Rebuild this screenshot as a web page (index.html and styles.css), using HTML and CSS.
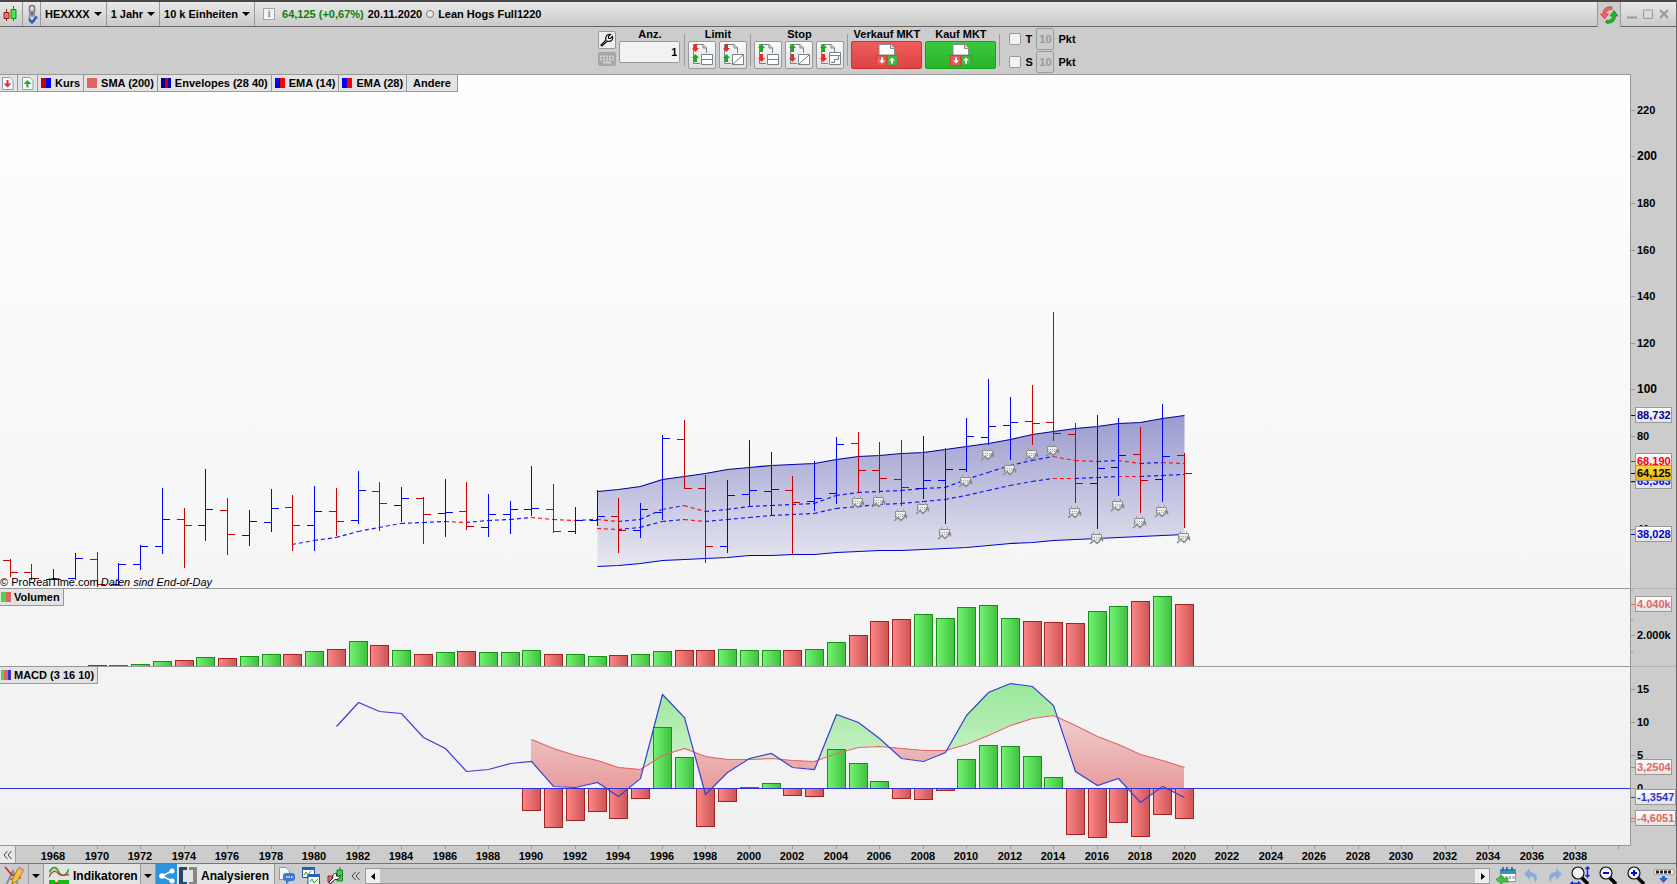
FILE: index.html
```html
<!DOCTYPE html>
<html lang="de">
<head>
  <title>HEXXXX - Lean Hogs Full1220</title>
  <meta charset="utf-8">
  <meta name="viewport" content="width=device-width, initial-scale=1">
  <link rel="stylesheet" href="styles.css">
</head>

<body>
  <svg class="defs" width="0" height="0" aria-hidden="true">
    <defs>
      <linearGradient id="up"><stop offset="0" stop-color="#72f472"/><stop offset="1" stop-color="#40c040"/></linearGradient>
      <linearGradient id="down"><stop offset="0" stop-color="#ff8686"/><stop offset="1" stop-color="#cc5555"/></linearGradient>
      <linearGradient id="band" gradientUnits="userSpaceOnUse" x1="0" y1="415" x2="0" y2="567"><stop offset="0" stop-color="#9b9bce"/><stop offset="1" stop-color="#e8e8f1"/></linearGradient>
      <linearGradient id="fill-up" gradientUnits="userSpaceOnUse" x1="0" y1="683" x2="0" y2="770"><stop offset="0" stop-color="#98e898"/><stop offset="1" stop-color="#cdf1cd"/></linearGradient>
      <linearGradient id="fill-down" gradientUnits="userSpaceOnUse" x1="0" y1="715" x2="0" y2="788"><stop offset="0" stop-color="#efd0d0"/><stop offset="1" stop-color="#e89c9c"/></linearGradient>
      <linearGradient id="tag" x2="0" y2="1"><stop offset="0" stop-color="#fff"/><stop offset="1" stop-color="#e4e4e4"/></linearGradient>
      <linearGradient id="tag-last" x2="0" y2="1"><stop offset="0" stop-color="#ffd83c"/><stop offset="1" stop-color="#f0b400"/></linearGradient>
      <symbol id="page" viewBox="0 0 24 24">
        <path d="M3.500 20.500V1.500H13L16.500 5V10M13 1.500V5H16.500M3.500 20.500H10" fill="none" stroke="#75838c"/>
      </symbol>
      <symbol id="arrow-down" viewBox="0 0 7 8"><path d="M2 0H5V4H7L3.500 8L0 4H2Z"/></symbol>
      <symbol id="arrow-up" viewBox="0 0 7 8"><path d="M2 8H5V4H7L3.500 0L0 4H2Z"/></symbol>
      <symbol id="market" viewBox="0 0 22 22">
        <path d="M3 0.500H15L18.500 4V11H3Z" fill="#fff" stroke="#8b8b8b"/>
        <path d="M14.500 0.500V4.500H18.500" fill="#ddd" stroke="#8b8b8b"/>
        <path d="M0 11H11V22H0Z" fill="#e03c3c"/><path d="M11 11H22V22H11Z" fill="#1cae1c"/>
        <path d="M1 12H10V21H1ZM12 12H21V21H12Z" fill="#fff" opacity=".15"/>
        <path d="M5 13.500H7V16.500H9L6 19.500L3 16.500H5ZM15 19.500H17V16.500H19L16 13.500L13 16.500H15Z" fill="#fff"/>
      </symbol>
      <symbol id="lens" viewBox="0 0 20 20">
        <path d="M12 12L18 18" stroke="#000" stroke-width="3.500"/>
        <circle cx="8" cy="7" r="6" fill="#eef3f8" stroke="#111" stroke-width="1.200"/>
      </symbol>
    </defs>
  </svg>

  <header class="titlebar">
    <button class="cell cell_icon" aria-label="Chartstil">
      <svg width="16" height="18" viewBox="0 0 16 18">
        <path d="M4.500 4V16" stroke="#a01c1c"/><path d="M2 7.500H7V13.500H2Z" fill="#e87474" stroke="#a01c1c"/>
        <path d="M11.500 1V16" stroke="#169016"/><path d="M9 4.500H14V13.500H9Z" fill="#4ce44c" stroke="#169016"/>
      </svg>
    </button>
    <button class="cell cell_link" aria-label="Verknüpfen">
      <svg width="12" height="21" viewBox="0 0 12 21" fill="none">
        <rect x="3.500" y="1.500" width="5" height="8" rx="2.500" stroke="#777" stroke-width="1.500"/>
        <rect x="3.500" y="10" width="5" height="8" rx="2.500" stroke="#888" stroke-width="1.500"/>
        <path d="M6 6V13" stroke="#555"/>
        <path d="M3 15L6 18.500L11 12.500" stroke="#1e5ed0" stroke-width="2.200"/>
      </svg>
    </button>
    <button class="cell cell_menu">HEXXXX <i class="caret"></i></button>
    <button class="cell cell_menu">1 Jahr <i class="caret"></i></button>
    <button class="cell cell_menu">10 k Einheiten <i class="caret"></i></button>
    <div class="quote">
      <span class="quote__info">i</span>
      <span class="quote__price">64,125 (+0,67%)</span>
      <span>20.11.2020</span>
      <span class="quote__dot"></span>
      <span>Lean Hogs Full1220</span>
    </div>
    <button class="refresh" aria-label="Aktualisieren">
      <svg width="18" height="18" viewBox="0 0 18 18">
        <path d="M12 1C6 0 3 3 3 8H0.500L4.500 13L8.500 8H6C6 5 8 3.500 12 3.500Z" fill="#f06060" stroke="#b83030" stroke-width=".6"/>
        <path d="M6 17C12 18 15.500 15 15.500 10H18L14 4.500L10 10H12.500C12.500 13 10 14.500 6 14.500Z" fill="#20b820" stroke="#107010" stroke-width=".6"/>
      </svg>
    </button>
    <div class="window-buttons">
      <button aria-label="Minimieren"><svg width="10" height="10"><path d="M0 8.500H10" stroke="#999" stroke-width="2"/></svg></button>
      <button aria-label="Maximieren"><svg width="10" height="10"><path d="M.5 1H9.500V9.500H.5Z" fill="none" stroke="#999"/></svg></button>
      <button aria-label="Schließen"><svg width="10" height="10"><path d="M1 1L9 9M9 1L1 9" stroke="#999" stroke-width="2"/></svg></button>
    </div>
  </header>

  <div class="trading">
    <div class="trading__tools">
      <button class="tool" aria-label="Einstellungen">
        <svg width="14" height="14" viewBox="0 0 14 14"><path d="M2 13L1 12L6 7C5 4 7 1 10.500 1.500L8.500 3.500V5.500H10.500L12.500 3.500C13.500 7 10.500 9 7.500 8Z" fill="#fff" stroke="#111" stroke-width="1.200"/></svg>
      </button>
      <button class="tool tool_keyboard" aria-label="Tastatur">
        <svg width="14" height="9"><path d="M0 1.500H14M0 4.500H14" stroke="#d4d4d4" stroke-width="2" stroke-dasharray="2 1"/><path d="M3 7.500H11" stroke="#d4d4d4" stroke-width="2"/></svg>
      </button>
    </div>
    <label class="group group_qty">Anz.<input class="qty" type="text" value="1"></label>
    <div class="group">Limit
      <div class="group__buttons">
        <button class="order" aria-label="Limit Order"><svg width="24" height="24"><use href="#page"/><g fill="#e02c2c"><use href="#arrow-down" x="2" y="1" width="7" height="8"/></g><g fill="#10b010"><use href="#arrow-up" x="2" y="11" width="7" height="8"/></g><path d="M11.500 11.500H22.500V21.500H11.500ZM11 16.500H23" fill="#fff" stroke="#75838c"/></svg></button>
        <button class="order" aria-label="Limit Linie"><svg width="24" height="24"><use href="#page"/><g fill="#e02c2c"><use href="#arrow-down" x="2" y="1" width="7" height="8"/></g><g fill="#10b010"><use href="#arrow-up" x="2" y="11" width="7" height="8"/></g><path d="M11.500 11.500H22.500V21.500H11.500ZM12 21L22 12" fill="#fff" stroke="#75838c"/></svg></button>
      </div>
    </div>
    <div class="group">Stop
      <div class="group__buttons">
        <button class="order" aria-label="Stop Order"><svg width="24" height="24"><use href="#page"/><g fill="#10b010"><use href="#arrow-up" x="2" y="1" width="7" height="8"/></g><g fill="#e02c2c"><use href="#arrow-down" x="2" y="11" width="7" height="8"/></g><path d="M11.500 11.500H22.500V21.500H11.500ZM11 16.500H23" fill="#fff" stroke="#75838c"/></svg></button>
        <button class="order" aria-label="Stop Linie"><svg width="24" height="24"><use href="#page"/><g fill="#10b010"><use href="#arrow-up" x="2" y="1" width="7" height="8"/></g><g fill="#e02c2c"><use href="#arrow-down" x="2" y="11" width="7" height="8"/></g><path d="M11.500 11.500H22.500V21.500H11.500ZM12 21L22 12" fill="#fff" stroke="#75838c"/></svg></button>
        <button class="order" aria-label="Trailing Stop"><svg width="24" height="24"><use href="#page"/><g fill="#10b010"><use href="#arrow-up" x="2" y="1" width="7" height="8"/></g><g fill="#e02c2c"><use href="#arrow-down" x="2" y="11" width="7" height="8"/></g><path d="M11.500 9.500H22.500V21.500H11.500ZM11 12.500H23M13 19.500H16.500V16.500H20.500V13" fill="#fff" stroke="#75838c"/></svg></button>
      </div>
    </div>
    <div class="group group_market">Verkauf MKT
      <button class="market market_sell" aria-label="Verkauf MKT"><svg width="22" height="22"><use href="#market"/></svg></button>
    </div>
    <div class="group">Kauf MKT
      <button class="market market_buy" aria-label="Kauf MKT"><svg width="22" height="22"><use href="#market"/></svg></button>
    </div>
    <div class="limits">
      <div class="limits__row"><input id="target" type="checkbox"><label for="target">T</label><input class="points" type="text" value="10" aria-label="T Punkte" disabled>Pkt</div>
      <div class="limits__row"><input id="stop" type="checkbox"><label for="stop">S</label><input class="points" type="text" value="10" aria-label="S Punkte" disabled>Pkt</div>
    </div>
  </div>

  <main class="workspace">
    <div class="panels">
      <section class="panel panel_price">
        <div class="tabs">
          <button class="tab tab_icon" aria-label="Nach unten"><svg width="13" height="13"><path d="M1.500 .5H9L12 3.500V12.500H1.500Z" fill="#f8fbff" stroke="#8aa0b4"/><path d="M5.500 3H7.500V6.500H10.500L6.500 10.500L2.500 6.500H5.500Z" fill="#e03030"/></svg></button>
          <button class="tab tab_icon tab_up" aria-label="Nach oben"><svg width="13" height="13"><path d="M1.500 .5H9L12 3.500V12.500H1.500Z" fill="#f8fbff" stroke="#8aa0b4"/><path d="M5.500 10.500H7.500V7H10.500L6.500 3L2.500 7H5.500Z" fill="#18b018"/></svg></button>
          <button class="tab"><i class="swatch swatch_kurs"></i>Kurs</button>
          <button class="tab"><i class="swatch swatch_sma"></i>SMA (200)</button>
          <button class="tab"><i class="swatch swatch_env"></i>Envelopes (28 40)</button>
          <button class="tab"><i class="swatch swatch_ema"></i>EMA (14)</button>
          <button class="tab"><i class="swatch swatch_ema"></i>EMA (28)</button>
          <button class="tab tab_more">Andere</button>
        </div>
        <svg class="plot" id="price" data-top="75" height="513"></svg>
      </section>
      <section class="panel">
        <div class="tabs"><button class="tab"><i class="swatch swatch_vol"></i>Volumen</button></div>
        <svg class="plot" id="volume" data-top="589" height="77"></svg>
      </section>
      <section class="panel">
        <div class="tabs"><button class="tab"><i class="swatch swatch_macd"></i>MACD (3 16 10)</button></div>
        <svg class="plot" id="macd" data-top="667" height="178"></svg>
      </section>
    </div>
    <svg class="axis" id="axis" width="45" height="772"></svg>
  </main>

  <div class="timeline">
    <button class="timeline__back" aria-label="Zurück"><svg width="10" height="10"><path d="M4.500 1L1 5L4.500 9M8.500 1L5 5L8.500 9" fill="none" stroke="#444"/></svg></button>
    <svg class="timeline__years" id="years" height="18"></svg>
  </div>

  <footer class="statusbar">
    <button class="status status_draw" aria-label="Zeichnen">
      <svg width="21" height="20" viewBox="0 0 21 20"><path d="M2 19L9 5L14 19M5 13H12" fill="none" stroke="#8a9298" stroke-width="2"/><path d="M1 1L8 9L17 12" fill="none" stroke="#e01818" stroke-width="1.500"/><path d="M8 18L9 12L15 1L20 4L13 15Z" fill="#f4c440" stroke="#b07c10"/><path d="M15 1L20 4L19 6L14 3Z" fill="#f09090"/></svg>
    </button>
    <button class="status status_caret" aria-label="Zeichenmenü"><i class="caret"></i></button>
    <button class="status status_main">
      <svg width="20" height="20" viewBox="0 0 20 20"><path d="M0 6C5-2 8 2 10 6S16 12 20 3V9C16 10 13 9 10 6C7 3 4 3 0 9Z" fill="#a8dca8"/><path d="M0 6C5-2 8 2 10 6S16 12 20 3" fill="none" stroke="#28a028" stroke-width="1.500"/><path d="M0 11C4 3 7 5 10 8S16 8 20 9" fill="none" stroke="#b84848" stroke-width="1.500"/><path d="M0 14H6V20H0ZM13 14H20V20H13Z" fill="#1cb81c"/><path d="M6 16H9V20H6Z" fill="#e02c2c"/><path d="M9 14H13V20H9Z" fill="#1cb81c"/></svg>
      Indikatoren
    </button>
    <button class="status status_caret" aria-label="Indikatormenü"><i class="caret"></i></button>
    <button class="status status_share" aria-label="Teilen">
      <svg width="16" height="16" viewBox="0 0 16 16"><path d="M13 3L3 8L13 13" fill="none" stroke="#fff" stroke-width="1.500"/><g fill="#fff"><circle cx="13" cy="3" r="2.500"/><circle cx="3" cy="8" r="2.800"/><circle cx="13" cy="13" r="2.500"/></g></svg>
    </button>
    <button class="status status_analyse">
      <svg width="18" height="18" viewBox="0 0 18 18"><path d="M0 0H8V3H4V15H8V18H0Z" fill="#24486c"/><path d="M18 0H10V3H14V15H10V18H18Z" fill="#888"/></svg>
      Analysieren
    </button>
    <div class="status-icons">
      <button aria-label="Nachrichten"><svg width="16" height="18" viewBox="0 0 16 18"><path d="M.5 12.500V.5H7L10.500 4V12.500Z" fill="#f4f7fa" stroke="#8a9aa8"/><rect x="4" y="6" width="12" height="8" rx="3" fill="#3c78d8"/><path d="M7 13V18L11 13Z" fill="#3c78d8"/><path d="M7 10H13.500" stroke="#fff" stroke-width="1.500" stroke-dasharray="1.500 1"/></svg></button>
      <button aria-label="Fenster"><svg width="18" height="18" viewBox="0 0 18 18"><path d="M.5 .5H12.500V10.500H.5Z" fill="#fff" stroke="#1e4e9c"/><path d="M0 0H13V3H0Z" fill="#2860b8"/><path d="M2 8L4 5L6 8L9 4" fill="none" stroke="#20a020"/><path d="M6 7.500H17.500V17.500H6Z" fill="#fff" stroke="#1e4e9c"/><path d="M5.500 7H18V10H5.500Z" fill="#2860b8"/><path d="M8 15L10 12L12 16L16 12" fill="none" stroke="#20a020"/></svg></button>
      <button aria-label="Handelssystem"><svg width="17" height="18" viewBox="0 0 17 18"><path d="M10 3H15.500V14H10Z" fill="#3cd04c" stroke="#128020"/><path d="M13 0V3" stroke="#128020"/><path d="M1 9H6V15H1Z" fill="#e86060" stroke="#a02020"/><path d="M3 17L2 15L6 11C5 8 7 6 9.500 6.500V9L11.500 9.500L13 8C13.500 11 11 13 8 12.500Z" fill="#fff" stroke="#222"/></svg></button>
      <button aria-label="Einklappen"><svg width="10" height="10"><path d="M4.500 1L1 5L4.500 9M8.500 1L5 5L8.500 9" fill="none" stroke="#444"/></svg></button>
    </div>
    <div class="scroller">
      <button aria-label="Links"><svg width="5" height="7"><path d="M4 0V7L0 3.500Z"/></svg></button>
      <button aria-label="Rechts"><svg width="5" height="7"><path d="M1 0V7L5 3.500Z"/></svg></button>
    </div>
    <div class="view-tools">
      <button aria-label="Datum"><svg width="20" height="18" viewBox="0 0 20 18"><path d="M4.500 3.500H19.500V14.500H4.500Z" fill="#fff" stroke="#8a9aa8"/><path d="M4 2H20V7H4Z" fill="#3a90b8"/><path d="M7 0V4M11 0V4M16 0V4" stroke="#226080" stroke-width="1.500"/><path d="M6 10.500H19" stroke="#9ab" stroke-width="3" stroke-dasharray="2 1.500"/><path d="M0 12.500L6 8V11H12V15H6V17.500Z" fill="#3cc83c" stroke="#168016" stroke-width=".6"/></svg></button>
      <button aria-label="Rückgängig"><svg width="15" height="16" viewBox="0 0 15 16"><path d="M0 6L6 0V4C12 4 15 9 11 15C11 11 10 8.500 6 8.500V12Z" fill="#8aacd8"/></svg></button>
      <button aria-label="Wiederholen"><svg width="15" height="16" viewBox="0 0 15 16"><path d="M15 6L9 0V4C3 4 0 9 4 15C4 11 5 8.500 9 8.500V12Z" fill="#8aacd8"/></svg></button>
      <button aria-label="Zoom anpassen"><svg width="20" height="20"><use href="#lens"/><path d="M17.500 1V11M15.500 3L17.500 1L19.500 3M15.500 9L17.500 11L19.500 9M1 17.500H10M3 15.500L1 17.500L3 19.500M8 15.500L10 17.500L8 19.500" fill="none" stroke="#0c28e8" stroke-width="1.400"/></svg></button>
      <button aria-label="Verkleinern"><svg width="20" height="20"><use href="#lens"/><path d="M5 7H11" stroke="#0000e0" stroke-width="2"/></svg></button>
      <button aria-label="Vergrößern"><svg width="20" height="20"><use href="#lens"/><path d="M5 7H11M8 4V10" stroke="#0000e0" stroke-width="2"/></svg></button>
      <button aria-label="Leiste"><svg width="20" height="18" viewBox="0 0 20 18"><path d="M.5 2.500H19.500V7.500H.5Z" fill="#f2f2f2" stroke="#aaa"/><path d="M2 5H18" stroke="#222" stroke-width="3" stroke-dasharray="3 1"/><path d="M8 9H11V11H14L9.500 16L5 11H8Z" fill="#2868c8"/></svg></button>
    </div>
  </footer>

  <script src="chart.js"></script>
</body>
</html>
```

FILE: chart.js
```js
const YEAR_STEP = 21.74
const ZERO = 788.5

// from 1966: high, low, open, close, direction
const bars = [
  [559, 576, 560, 572, "r"], [564, 579, 572, 578, "r"], [569, 579, 579, 579, "b"], [553, 579, 578, 558, "b"],
  [552, 586, 559, 584, "r"], [563, 585, 584, 564, "b"], [545, 569, 564, 546, "b"], [488, 553, 546, 519, "b"],
  [508, 567, 519, 525, "r"], [469, 540, 525, 509, "b"], [498, 554, 510, 534, "r"], [510, 545, 535, 521, "b"],
  [489, 531, 522, 508, "b"], [495, 550, 507, 525, "r"], [486, 550, 525, 511, "b"], [488, 535, 511, 521, "r"],
  [471, 523, 520, 490, "b"], [482, 530, 491, 503, "r"], [487, 521, 505, 498, "b"], [497, 543, 498, 514, "r"],
  [479, 536, 513, 512, "b"], [482, 529, 511, 526, "r"], [494, 536, 527, 514, "b"], [501, 533, 514, 509, "b"],
  [466, 515, 509, 508, "b"], [484, 532, 509, 531, "r"], [507, 533, 531, 520, "b"], [490, 525, 520, 516, "b"],
  [498, 552, 516, 530, "r"], [503, 537, 530, 509, "b"], [435, 519, 512, 438, "b"], [420, 488, 439, 488, "r"],
  [475, 562, 488, 546, "r"], [480, 552, 546, 495, "b"], [440, 505, 494, 490, "b"], [452, 514, 491, 489, "b"],
  [476, 554, 490, 502, "r"], [461, 510, 501, 498, "b"], [437, 503, 493, 444, "b"], [432, 492, 443, 470, "r"],
  [442, 492, 470, 478, "r"], [440, 505, 479, 487, "r"], [436, 498, 488, 480, "b"], [448, 523, 480, 469, "b"],
  [418, 471, 469, 436, "b"], [379, 444, 437, 426, "b"], [397, 459, 425, 422, "b"], [385, 444, 421, 423, "r"],
  [312, 440, 422, 433, "r"], [423, 502, 434, 483, "r"], [415, 528, 483, 468, "b"], [418, 495, 467, 455, "b"],
  [427, 512, 454, 480, "r"], [404, 501, 479, 456, "b"], [453, 527, 455, 473, "r"]
]

const upper = [491, 489, 486, 479, 476, 473, 469, 467, 465, 464, 463, 459, 456, 455, 453, 452, 449, 446, 443, 439, 434, 431, 428, 426, 423, 422, 418, 415]
const lower = [566, 565, 563, 560, 559, 558, 557, 555, 555, 554, 554, 552, 551, 550, 550, 549, 548, 547, 545, 543, 542, 540, 539, 538, 537, 536, 535, 534]
const ema14 = [544, 540, 537, 531, 527, 523, 522, 521, 522, 520, 519, 517, 519, 520, 519, 521, 519, 509, 505, 511, 509, 506, 505, 504, 503, 495, 492, 491, 490, 488, 487, 479, 472, 465, 460, 456, 460, 461, 460, 463, 462, 463]
const ema28 = [528, 529, 527, 521, 519, 521, 519, 517, 515, 514, 513, 508, 506, 504, 503, 501, 499, 495, 490, 485, 481, 478, 478, 477, 476, 476, 475, 474]
const markers = [502, 501, 515, 508, 533, 481, 454, 469, 454, 450, 512, 538, 505, 522, 511, 537]

const volumes = [665, 665, 664, 661, 660, 657, 658, 656, 654, 654, 651, 649, 641, 645, 650, 654, 652, 651, 652, 652, 650, 654, 654, 656, 655, 654, 651, 650, 650, 649, 650, 650, 650, 649, 642, 635, 621, 619, 614, 618, 607, 605, 618, 621, 622, 623, 611, 606, 601, 596, 604]

const histogram = [810, 827, 820, 811, 818, 798, 727, 757, 826, 801, 787, 783, 795, 796, 749, 763, 781, 798, 799, 790, 759, 745, 746, 756, 777, 834, 837, 822, 836, 814, 818]
const macd = [726, 702, 711, 713, 737, 748, 771, 769, 763, 761, 786, 787, 782, 796, 778, 694, 717, 794, 772, 758, 753, 767, 769, 714, 722, 738, 758, 761, 752, 715, 692, 683, 686, 705, 771, 785, 778, 802, 786, 797]
const signal = [739, 748, 755, 760, 767, 769, 755, 748, 756, 759, 759, 758, 760, 761, 753, 747, 746, 748, 750, 750, 744, 735, 725, 718, 715, 725, 736, 744, 754, 760, 767]

const x = (year) => Math.round(53.2 + (year - 1968) * YEAR_STEP)
const points = (values, from) => values.map((y, i) => `${x(from + i) + 0.5},${y + 0.5}`)
const line = (values, from, color) => `<polyline points="${points(values, from).join(" ")}" fill="none" stroke="${color}" stroke-width="1.2"/>`

function priceBars() {
  return bars.map(([high, low, open, close, dir], i) => {
    const cx = x(1966 + i) + 0.5
    const d = `M${cx} ${high}V${low + 1}M${cx - 7.5} ${open + 0.5}H${cx}M${cx} ${close + 0.5}H${cx + 7}`
    return `<path class="bar bar_${dir}" d="${d}"/>`
  }).join("")
}

// rising parts are blue, flat and falling ones red
function average(values, from) {
  return values.slice(1).map((y, i) => {
    const color = y < values[i] ? "#1414ff" : "#ff1414"
    return `<path class="average" stroke="${color}" d="M${x(from + i)} ${values[i] + 0.5}L${x(from + i + 1)} ${y + 0.5}"/>`
  }).join("")
}

function marker(cy, i) {
  const left = x(2005 + i) - 7
  return `<g transform="translate(${left} ${cy - 6})">
    <path d="M1 2H12V8L9 9L7 11L4 8L1 10Z" fill="#ececec"/><path d="M1.500 9V2.500H11.500V7" fill="none" stroke="#8c8c8c"/>
    <path d="M3.500 0V3M9.500 0V3" stroke="#a0a0a0"/><path d="M2 5.500H11M2 7.500H10" stroke="#a8a8a8" stroke-dasharray="1 1"/>
    <path d="M0 12L4 8.500L7 11.500L12 6.500M9.500 6.500H12.500V9.500" fill="none" stroke="#888" stroke-width="1.400"/>
  </g>`
}

function column(year, top, bottom, up) {
  return `<rect x="${x(year) - 8.5}" y="${top + 0.5}" width="18" height="${Math.max(bottom - top, 0)}" fill="url(#${up ? "up" : "down"})" stroke="${up ? "#149414" : "#a02424"}"/>`
}

// area between MACD and its signal, split where they cross
function macdFill() {
  const fast = macd.slice(9)
  let out = ""
  for (let i = 0; i < signal.length - 1; i++) {
    const x0 = x(1990 + i)
    const x1 = x(1991 + i)
    const a = fast[i] - signal[i]
    const b = fast[i + 1] - signal[i + 1]
    const fill = (v) => v < 0 ? "url(#fill-up)" : "url(#fill-down)"
    if (a * b < 0) {
      const t = a / (a - b)
      const xc = x0 + (x1 - x0) * t
      const yc = signal[i] + (signal[i + 1] - signal[i]) * t
      out += `<path d="M${x0} ${fast[i]}L${xc} ${yc}L${x0} ${signal[i]}Z" fill="${fill(a)}"/>`
      out += `<path d="M${x1} ${fast[i + 1]}L${xc} ${yc}L${x1} ${signal[i + 1]}Z" fill="${fill(b)}"/>`
    } else {
      out += `<path d="M${x0} ${fast[i]}L${x1} ${fast[i + 1]}V${signal[i + 1]}L${x0} ${signal[i]}Z" fill="${fill(a + b)}"/>`
    }
  }
  return out
}

function drawPrice() {
  const band = points(upper, 1993).concat(points(lower, 1993).reverse()).join(" ")
  return `<polygon points="${band}" fill="url(#band)"/>`
    + line(upper, 1993, "#00009c") + line(lower, 1993, "#0000d0")
    + average(ema14, 1979) + average(ema28, 1993)
    + priceBars() + markers.map(marker).join("")
    + `<text class="copyright" y="586">© ProRealTime.com<tspan class="copyright__note" dx="2">Daten sind End-of-Day</tspan></text>`
}

function drawVolume() {
  return volumes.map((top, i) => column(1970 + i, top, 668, bars[i + 4][4] === "b")).join("")
}

function drawMacd(width) {
  const columns = histogram.map((y, i) => {
    const up = y < ZERO
    return up ? column(1990 + i, y, 788, true) : column(1990 + i, 788, y, false)
  }).join("")
  return `<g shape-rendering="crispEdges">${macdFill()}</g>` + columns
    + `<path d="M0 ${ZERO}H${width}" stroke="#3030d8"/>`
    + line(signal, 1990, "#e06868") + line(macd, 1981, "#3c3cd8")
}

function drawAxis() {
  const ticks = [[110, "220"], [156, "200", 12], [203, "180"], [250, "160"], [296, "140"], [343, "120"], [389, "100", 12], [436, "80"], [482, ""], [529, "40"], [635, "2.000k"], [689, "15"], [722, "10"], [755, "5"], [788, "0"], [821, ""]]
  const tags = [[415, "88,732", "#00009c"], [481, "63,363", "#0000ff"], [461, "68,190", "#ff0000"], [534, "38,028", "#0000d0"], [604, "4.040k", "#e06464"], [767, "3,2504", "#e06464"], [797, "-1,3547", "#3030d8"], [818, "-4,6051", "#e06464"]]
  let out = `<path d="M0 588.5H45M0 666.5H45" stroke="#b2b2b2"/>`
  for (const y of [590, 620, 651]) {
    out += `<path d="M0 ${y + 0.5}H2" stroke="#999"/>`
  }
  for (const [y, text, size = 11] of ticks) {
    out += `<path d="M0 ${y + 0.5}H4" stroke="#999"/><text x="6" y="${y + 4}" style="font-size:${size}px">${text}</text>`
  }
  for (const [y, text, color] of tags) {
    out += tag(y, text, color, "url(#tag)")
  }
  return out + tag(473, "64,125", "#000", "url(#tag-last)")
}

function tag(y, text, color, fill) {
  const width = text.length > 6 ? 40 : 36
  return `<path d="M0 ${y + 0.5}H4" stroke="${color}"/><rect x="4.5" y="${y - 7.5}" width="${width}" height="15" fill="${fill}" stroke="#999"/><text x="6" y="${y + 4}" fill="${color}">${text}</text>`
}

function drawYears() {
  let out = ""
  for (let year = 1968; year <= 2040; year += 2) {
    out += `<path d="M${x(year) + 0.5} 0V3" stroke="#999"/>`
    if (year < 2040) {
      out += `<text x="${x(year)}" y="14" text-anchor="middle">${year}</text>`
    }
  }
  return out
}

function render() {
  const layers = { price: drawPrice, volume: drawVolume, macd: drawMacd }
  for (const id in layers) {
    const svg = document.getElementById(id)
    const width = svg.clientWidth
    svg.setAttribute("viewBox", `0 ${svg.dataset.top} ${width} ${svg.clientHeight}`)
    svg.innerHTML = layers[id](width)
  }
  document.getElementById("axis").setAttribute("viewBox", "0 74 45 772")
  document.getElementById("axis").innerHTML = drawAxis()

  // the axis starts after the back button
  const years = document.getElementById("years")
  years.setAttribute("viewBox", `16 0 ${years.clientWidth} 18`)
  years.innerHTML = drawYears()
}

render()
window.addEventListener("resize", render)
```

FILE: styles.css
```css
*,
*::before,
*::after {
  box-sizing: border-box;
  margin: 0;
  padding: 0;
}

html {
  height: 100%;
  overflow: hidden;
}

body {
  height: 100%;
  overflow: hidden;
  border-top: 2px solid #4a4848;
  border-right: 1px solid #666;
  color: #000;
  font: bold 11px/14px "Liberation Sans", Arial, sans-serif;
  background-color: #ccc;
}

button,
input {
  border: none;
  border-radius: 0;
  color: inherit;
  font: inherit;
  background: none;
}

svg {
  display: block;
  flex: none;
}

.defs {
  position: absolute;
}

.caret {
  border: 4px solid transparent;
  border-top-color: #000;
  border-bottom: none;
}

/* title bar */

.titlebar {
  display: flex;
  height: 25px;
  border-bottom: 1px solid #666;
  background: linear-gradient(#e9e9e9, #cacaca);
}

.cell {
  display: flex;
  align-items: center;
  border-right: 1px solid #999;
}

.cell_icon {
  width: 23px;
  padding-left: 2px;
}

.cell_link {
  justify-content: center;
  width: 18px;
}

.cell_menu {
  gap: 4px;
  padding: 0 4px;
}

.quote {
  display: flex;
  flex: 1;
  align-items: center;
  gap: 4px;
  padding-left: 8px;
  white-space: nowrap;
}

.quote__info {
  width: 12px;
  height: 12px;
  margin-right: 3px;
  border: 1px solid #9aa6b0;
  color: #7a8a98;
  font: bold 10px/10px "Liberation Serif", serif;
  text-align: center;
  background-color: #f4f4f4;
}

.quote__price {
  color: #0a800a;
}

.quote__dot {
  width: 8px;
  height: 8px;
  border: 1px solid #777;
  border-radius: 50%;
  background-color: #eee;
}

.refresh {
  display: flex;
  justify-content: center;
  align-items: center;
  width: 24px;
  height: 25px;
  border: solid #999;
  border-width: 0 1px;
  background-color: #ccc;
}

.window-buttons {
  display: flex;
  align-items: center;
  gap: 6px;
  padding: 0 7px 0 6px;
}

/* order bar */

.trading {
  display: flex;
  justify-content: center;
  height: 47px;
  padding-right: 2px;
}

.trading__tools {
  display: grid;
  align-content: start;
  gap: 3px;
  padding: 4px 3px 0 0;
}

.tool {
  display: grid;
  place-items: center;
  width: 18px;
  height: 18px;
  border: 1px solid #999;
  border-radius: 2px;
  background-color: #eee;
}

.tool_keyboard {
  height: 14px;
  border: none;
  background-color: #a6a6a6;
}

.group {
  position: relative;
  padding-right: 7px;
  text-align: center;
  white-space: nowrap;
}

.group::after {
  content: "";
  position: absolute;
  top: 7px;
  right: 3px;
  height: 32px;
  border-right: 1px solid #999;
}

.group_qty {
  padding-right: 8px;
}

.group_market {
  padding-right: 3px;
}

.group_market::after {
  display: none;
}

.group__buttons {
  display: flex;
  gap: 3px;
}

.qty {
  display: block;
  width: 61px;
  height: 22px;
  padding-right: 2px;
  border: 1px solid #999;
  border-radius: 2px;
  text-align: right;
  background-color: #f2f2f2;
}

.order,
.market {
  display: grid;
  place-items: center;
  width: 28px;
  height: 28px;
  border: 1px solid #999;
  border-radius: 2px;
  background: linear-gradient(#fafafa, #e0e0e0);
}

.market {
  width: 71px;
}

.market_sell {
  border-color: #d03030;
  background: linear-gradient(#f05c5c, #dc4444);
}

.market_buy {
  border-color: #18a018;
  background: linear-gradient(#3cc83c, #28b428);
}

.limits {
  display: grid;
  align-content: start;
  gap: 1px;
  padding: 1px 0 0 6px;
}

.limits__row {
  display: flex;
  align-items: center;
  gap: 4px;
}

.limits__row input[type="checkbox"] {
  appearance: none;
  width: 12px;
  height: 12px;
  border: 1px solid #999;
  border-radius: 2px;
  background-color: #f2f2f2;
}

.limits__row label {
  width: 7px;
}

.points {
  width: 18px;
  height: 22px;
  border: 1px solid #999;
  border-radius: 2px;
  color: #999;
  text-align: center;
}

/* charts */

.workspace {
  display: flex;
}

.panels {
  flex: 1;
  min-width: 0;
  border-top: 1px solid #999;
  border-right: 1px solid #999;
  background: linear-gradient(#fefefe, #f1f1f1);
}

.panel {
  position: relative;
  border-bottom: 1px solid #999;
}

.plot {
  width: 100%;
}

.bar {
  fill: none;
  shape-rendering: crispEdges;
}

.bar_b {
  stroke: #00f;
}

.bar_r {
  stroke: #c80000;
}

.average {
  stroke-width: 1.2;
  stroke-dasharray: 4 3;
}

.copyright {
  font-weight: normal;
}

.copyright__note {
  font-style: italic;
}

.tabs {
  position: absolute;
  top: 0;
  left: 0;
  display: flex;
}

.tab {
  display: flex;
  align-items: center;
  gap: 3px;
  height: 17px;
  padding: 0 3px 0 1px;
  border: solid #999;
  border-width: 0 1px 1px 0;
  white-space: nowrap;
  background-color: #e3e3e3;
}

.panel_price .tab {
  gap: 4px;
  padding-left: 3px;
}

.panel_price .tab_icon {
  width: 18px;
  padding: 0 0 0 1px;
}

.panel_price .tab_up {
  width: 20px;
  padding-left: 3px;
}

.panel_price .tab_more {
  padding: 0 6px;
}

.swatch {
  width: 10px;
  height: 10px;
}

.swatch_kurs {
  background: linear-gradient(to right, #c80000 50%, #00f 50%);
}

.swatch_sma {
  background-color: #e06464;
}

.swatch_env {
  background: linear-gradient(to right, #00008c 40%, #c80000 40% 70%, #0000d0 70%);
}

.swatch_ema {
  background: linear-gradient(to right, #00f 50%, #f00 50%);
}

.swatch_vol {
  background: linear-gradient(to right, #50d450 50%, #e06464 50%);
}

.swatch_macd {
  background: linear-gradient(to right, #50d450 33%, #e06464 33% 66%, #3030d8 66%);
}

/* time axis */

.timeline {
  display: flex;
  height: 18px;
  border-bottom: 1px solid #777;
}

.timeline__back {
  display: grid;
  place-items: center;
  width: 16px;
  border-right: 1px solid #999;
  background-color: #e8e8e8;
}

.timeline__years {
  flex: 1;
  min-width: 0;
}

/* bottom bar */

.statusbar {
  display: flex;
  height: 24px;
}

.status {
  display: flex;
  align-items: center;
  gap: 4px;
  border-right: 1px solid #999;
  font-size: 12px;
  white-space: nowrap;
}

.status_draw {
  width: 29px;
  padding-left: 4px;
}

.status_caret {
  justify-content: center;
  width: 15px;
}

.status_main {
  width: 97px;
  padding-left: 5px;
  background-color: #e3e3e3;
}

.status_share {
  justify-content: center;
  width: 21px;
  border: none;
  background-color: #2c94dc;
}

.status_analyse {
  width: 98px;
  padding-left: 2px;
  background-color: #e3e3e3;
}

.status-icons {
  display: flex;
  align-items: center;
  gap: 7px;
  padding: 0 4px;
}

.scroller {
  display: flex;
  flex: 1;
  justify-content: space-between;
  align-self: flex-start;
  margin-top: 4px;
  border: 1px solid #999;
  background-color: #c6c6c6;
}

.scroller button {
  display: grid;
  place-items: center;
  width: 14px;
  height: 14px;
  background-color: #eee;
}

.view-tools {
  display: flex;
  align-items: center;
  gap: 8px;
  padding: 0 2px 0 6px;
}
```
